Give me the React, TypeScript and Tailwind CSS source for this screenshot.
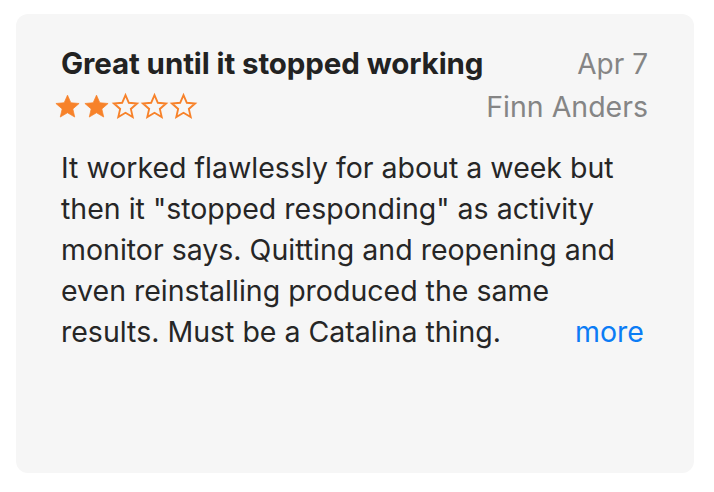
import React from "react";

const Star = ({ filled }: { filled: boolean }) => (
  <svg width="29" height="29" viewBox="0 0 24 24">
    <path
      d="M12 2.6l2.76 6.3 6.84.6-5.18 4.52 1.55 6.7L12 17.2l-5.97 3.52 1.55-6.7L2.4 9.5l6.84-.6z"
      fill={filled ? "#f7822a" : "none"}
      stroke="#f7822a"
      strokeWidth={filled ? 0.6 : 1.55}
      strokeLinejoin="miter"
    />
  </svg>
);

const lines = [
  "It worked flawlessly for about a week but",
  'then it "stopped responding" as activity',
  "monitor says. Quitting and reopening and",
  "even reinstalling produced the same",
];

export default function App() {
  return (
    <div className="w-[714px] h-[492px] bg-white pt-[14px] pl-[16px]" style={{ fontFamily: "Inter, 'Noto Sans', sans-serif" }}>
      <div className="w-[678px] h-[459px] bg-[#f6f6f6] rounded-[12px] pl-[45px] pr-[46px] pt-[29px]">
        <div className="flex justify-between items-baseline">
          <div className="text-[29.5px] font-bold text-[#222222] leading-[40px] tracking-[-0.1px]">Great until it stopped working</div>
          <div className="text-[28px] text-[#858585] leading-[40px]">Apr 7</div>
        </div>
        <div className="flex justify-between items-center mt-[3px]">
          <div className="flex ml-[-8px] mt-[-1px]">
            <Star filled />
            <Star filled />
            <Star filled={false} />
            <Star filled={false} />
            <Star filled={false} />
          </div>
          <div className="text-[28.5px] text-[#858585] leading-[40px]">Finn Anders</div>
        </div>
        <div className="mt-[20px] text-[28.5px] text-[#262626] leading-[41px]">
          {lines.map((l) => (
            <div key={l} className="whitespace-nowrap">{l}</div>
          ))}
          <div className="flex justify-between whitespace-nowrap">
            <span>results. Must be a Catalina thing.</span>
            <span className="text-[#0b7cf5] mr-[4px]">more</span>
          </div>
        </div>
      </div>
    </div>
  );
}
